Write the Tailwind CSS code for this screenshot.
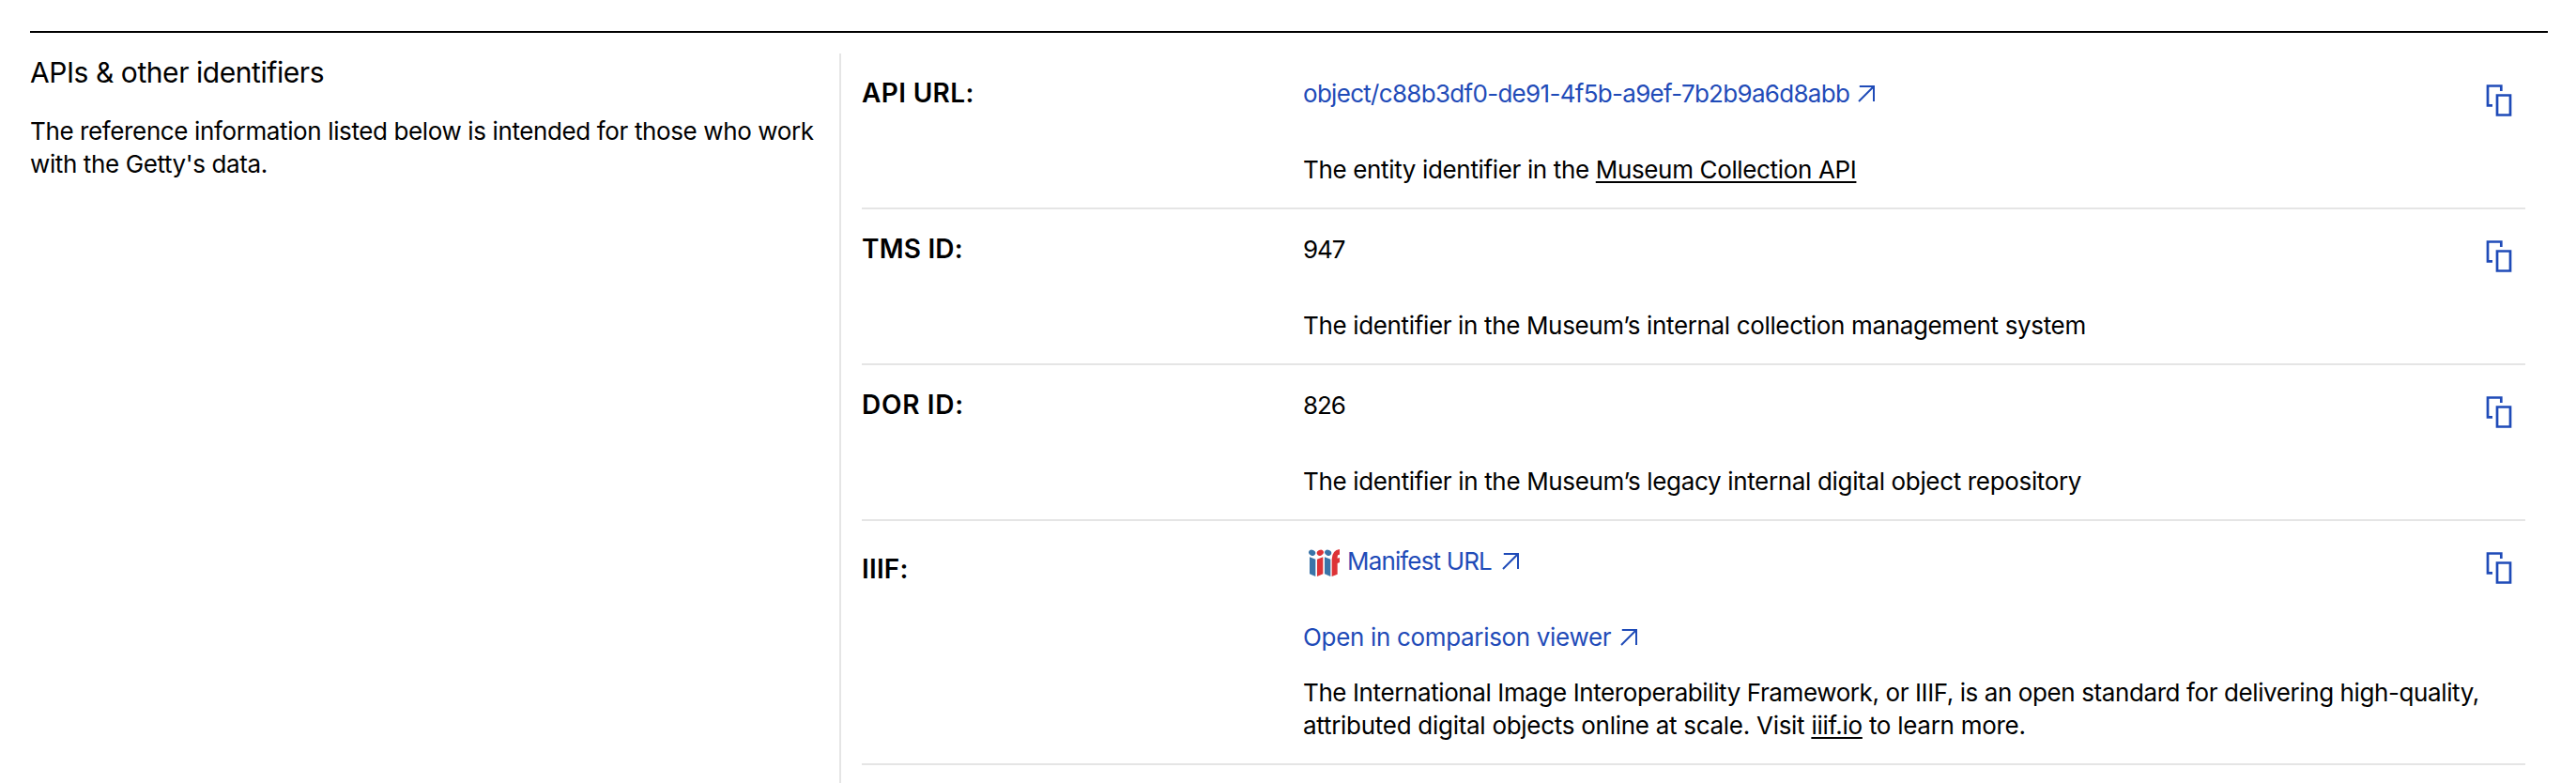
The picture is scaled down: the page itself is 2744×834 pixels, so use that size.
<!DOCTYPE html>
<html lang="en"><head><meta charset="utf-8"><title>APIs &amp; other identifiers</title>
<script src="https://cdn.jsdelivr.net/npm/@tailwindcss/browser@4"></script></head>
<body class="h-[834px] overflow-hidden bg-white pt-[33px] font-['Inter',sans-serif] text-[26px] leading-[35px] tracking-[-0.38px] text-black">
<svg class="hidden">
  <symbol id="arrow" viewBox="0 0 18 18"><path d="M1.8 1H17V17M17 1L1 17" fill="none" stroke="currentColor" stroke-width="2"/></symbol>
  <symbol id="copy" viewBox="0 0 28 34"><path d="M16.3 7V1.5H2V22.3H7M12 11.5H26V32.5H12Z" fill="none" stroke="currentColor" stroke-width="2.7"/></symbol>
</svg>
<main class="ml-8 w-[2682px] border-t-2 border-black">
  <div class="flex pt-[22px]">
    <section class="w-[862px] shrink-0 pt-0.5">
      <h2 class="text-[30px] leading-9 tracking-[-0.44px]">APIs &amp; other identifiers</h2>
      <p class="mt-[27px] whitespace-nowrap">The reference information listed below is intended for those who work<br>with the Getty's data.</p>
    </section>
    <section class="h-[777px] w-[1796px] border-l-2 border-[#e5e5e5] pl-[22px]">
      <div class="flex h-[166px] border-b-2 border-[#e5e5e5]">
        <h3 class="w-[470px] pt-6 text-[28px] leading-9 font-semibold tracking-[0.35px]">API URL:</h3>
        <div class="flex-1 pt-[25px]">
          <a class="flex items-center text-[#1f4bb8]"><span class="tracking-[-0.7px]">object/c88b3df0-de91-4f5b-a9ef-7b2b9a6d8abb</span><svg class="mt-px ml-[9px] size-[18px]"><use href="#arrow"/></svg></a>
          <p class="mt-[46px] tracking-[-0.35px]">The entity identifier in the <a class="underline decoration-2 underline-offset-[3px]">Museum Collection API</a></p>
        </div>
        <svg class="mt-[33px] mr-3.5 h-[34px] w-7 text-[#1f4bb8]"><use href="#copy"/></svg>
      </div>
      <div class="flex h-[166px] border-b-2 border-[#e5e5e5]">
        <h3 class="w-[470px] pt-6 text-[28px] leading-9 font-semibold tracking-[0.2px]">TMS ID:</h3>
        <div class="flex-1 pt-[25px]">
          <p class="tracking-[-1.1px]">947</p>
          <p class="mt-[46px] tracking-[-0.35px]">The identifier in the Museum’s internal collection management system</p>
        </div>
        <svg class="mt-[33px] mr-3.5 h-[34px] w-7 text-[#1f4bb8]"><use href="#copy"/></svg>
      </div>
      <div class="flex h-[166px] border-b-2 border-[#e5e5e5]">
        <h3 class="w-[470px] pt-6 text-[28px] leading-9 font-semibold tracking-[0.7px]">DOR ID:</h3>
        <div class="flex-1 pt-[25px]">
          <p class="tracking-[-1.1px]">826</p>
          <p class="mt-[46px] tracking-[-0.34px]">The identifier in the Museum’s legacy internal digital object repository</p>
        </div>
        <svg class="mt-[33px] mr-3.5 h-[34px] w-7 text-[#1f4bb8]"><use href="#copy"/></svg>
      </div>
      <div class="flex h-[260px] border-b-2 border-[#e5e5e5]">
        <h3 class="w-[470px] pt-[33px] text-[28px] leading-9 font-semibold tracking-[0.2px]">IIIF:</h3>
        <div class="flex-1 pt-[25px] whitespace-nowrap">
          <a class="flex items-center text-[#1f4bb8]">
            <svg class="mt-[3px] mr-[7px] ml-1.5 h-[29px] w-[34px]" viewBox="0 0 102 87">
              <g fill="#3a74a8"><ellipse cx="11" cy="11" rx="11" ry="9" transform="rotate(25 11 11)"/><path d="M3 25L22 32V87L3 79Z"/><ellipse cx="62" cy="11" rx="11" ry="9" transform="rotate(25 62 11)"/><path d="M51 25L70 32V87L51 79Z"/></g>
              <g fill="#dd3337"><ellipse cx="37" cy="11" rx="11" ry="9" transform="rotate(-25 37 11)"/><path d="M27 32L46 25V79L27 87Z"/><path d="M74 32Q75 3 99 0V17Q92 16 92 23V29L99 27V42L92 45V80L74 87Z"/></g>
            </svg>
            <span class="tracking-[-0.85px]">Manifest URL</span><svg class="mt-px ml-[11px] size-[18px]"><use href="#arrow"/></svg></a>
          <a class="mt-[46px] flex items-center text-[#1f4bb8]"><span class="tracking-[-0.33px]">Open in comparison viewer</span><svg class="mt-px ml-2.5 size-[18px]"><use href="#arrow"/></svg></a>
          <p class="mt-6 tracking-[-0.4px]">The International Image Interoperability Framework, or IIIF, is an open standard for delivering high-quality,<br><span class="tracking-[-0.28px]">attributed digital objects online at scale. Visit <a class="underline decoration-2 underline-offset-[3px]">iiif.io</a> to learn more.</span></p>
        </div>
        <svg class="mt-[33px] mr-3.5 h-[34px] w-7 text-[#1f4bb8]"><use href="#copy"/></svg>
      </div>
    </section>
  </div>
</main>
</body></html>
